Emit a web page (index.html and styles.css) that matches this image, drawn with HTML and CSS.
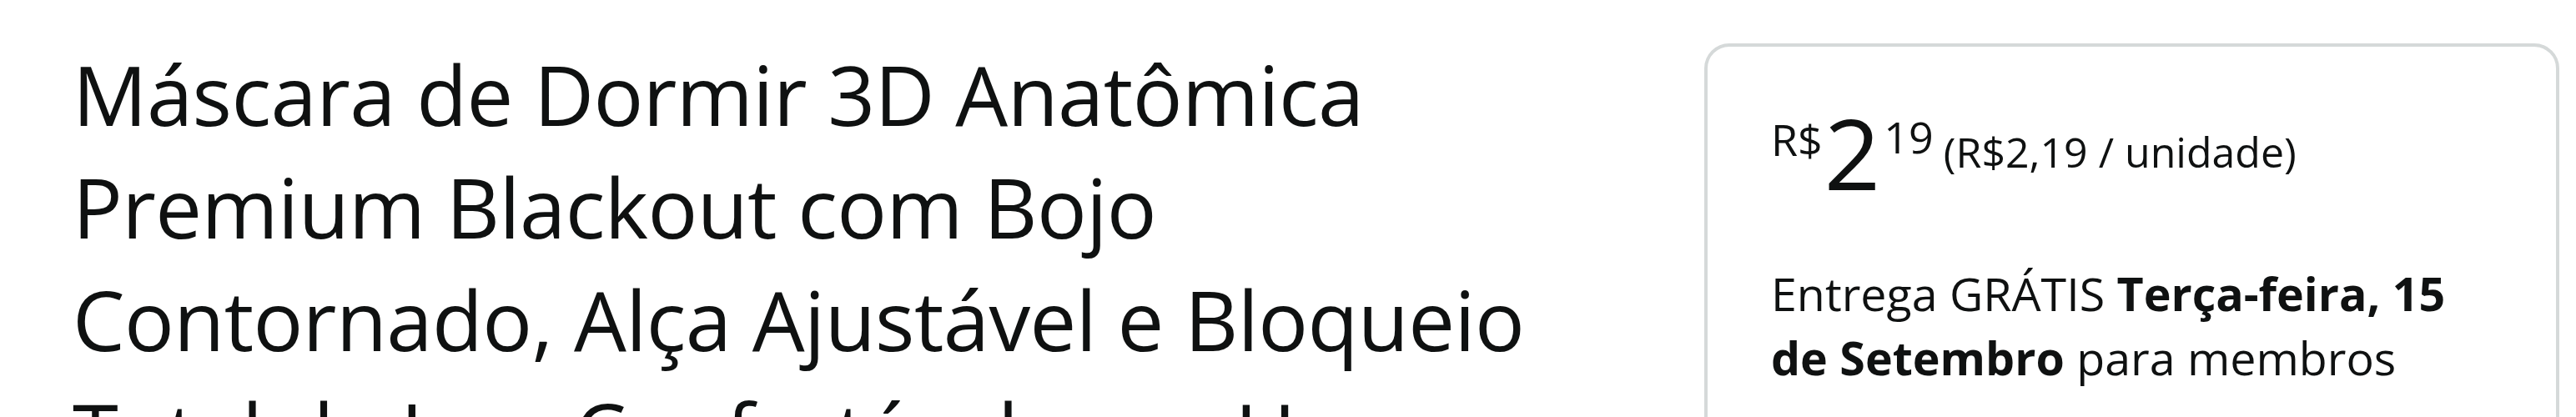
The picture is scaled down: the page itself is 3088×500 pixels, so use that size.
FILE: index.html
```html
<!DOCTYPE html>
<html lang="pt-BR">
<head>
<meta charset="utf-8">
<title>Máscara de Dormir 3D Anatômica</title>
<link rel="stylesheet" href="styles.css">
</head>
<body>
<main class="page">
  <section class="title-col">
    <h1 class="product-title">Máscara de Dormir 3D Anatômica Premium Blackout com Bojo Contornado, Alça Ajustável e Bloqueio Total da Luz, Confortável para Uso Noturno e Viagens</h1>
  </section>
  <aside class="buy-box">
    <div class="price-row">
      <span class="price-symbol">R$</span>
      <span class="price-whole">2</span>
      <span class="price-fraction">19</span>
      <span class="unit-price">(R$2,19 / unidade)</span>
    </div>
    <p class="delivery">Entrega GRÁTIS <b>Terça-feira, 15 de Setembro</b> para membros</p>
  </aside>
</main>
</body>
</html>
```

FILE: styles.css
```css
html, body {
  margin: 0;
  padding: 0;
  background: #ffffff;
  color: #0f1111;
  font-family: "Open Sans", "Noto Sans", sans-serif;
}

.page {
  display: flex;
  align-items: flex-start;
  padding: 0 20px 0 87px;
  gap: 96px;
  height: 500px;
  overflow: hidden;
}

.title-col {
  flex: 0 0 1860px;
  padding-top: 45px;
}

.product-title {
  margin: 0;
  font-size: 99.5px;
  line-height: 135px;
  font-weight: 400;
  letter-spacing: -0.6px;
}

.buy-box {
  flex: 1 1 auto;
  margin-top: 52px;
  border: 4px solid #d5d9d9;
  border-radius: 30px;
  padding: 0 100px 0 76px;
  height: 600px;
}

.price-row {
  display: flex;
  align-items: flex-start;
  padding-top: 68px;
}

.price-symbol {
  font-size: 52px;
  line-height: 1;
  margin-top: 17px;
}

.price-whole {
  font-size: 118px;
  line-height: 1;
  margin-left: 2px;
}

.price-fraction {
  font-size: 52px;
  line-height: 1;
  margin-top: 14px;
  margin-left: 4px;
}

.unit-price {
  font-size: 50px;
  line-height: 1;
  margin-top: 33px;
  margin-left: 12px;
}

.delivery {
  margin: 71px 0 0;
  font-size: 55.5px;
  line-height: 77px;
}

.delivery b {
  font-weight: 700;
}
```
